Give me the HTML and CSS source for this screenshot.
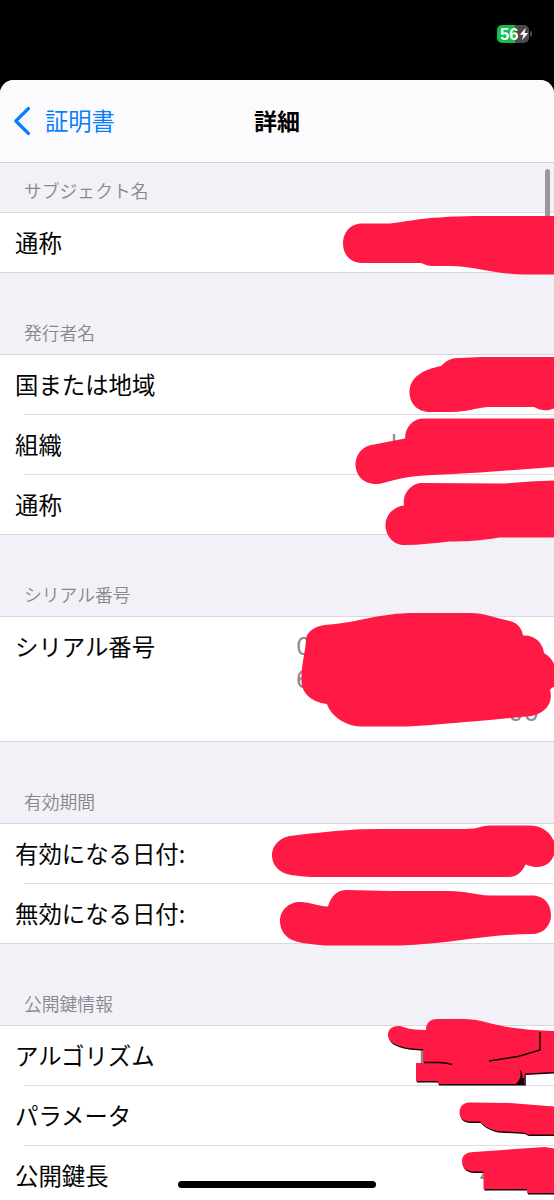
FILE: index.html
```html
<!DOCTYPE html>
<html lang="ja">
<head>
<meta charset="utf-8">
<title>詳細</title>
<link rel="stylesheet" href="styles.css">
</head>
<body>
<div class="screen">
  <header class="status">
    <div class="battery"><span class="level">56</span><svg class="bolt" width="10" height="14" viewBox="0 0 10 14"><path d="M6.8 0.8 0.8 7.8h3.6L3 13.2 9.2 5.9H5.5z"/></svg></div>
    <span class="battery-tip"></span>
  </header>
  <main class="sheet">
    <nav class="nav">
      <a class="back"><svg width="18" height="30" viewBox="0 0 18 30"><path d="M15.5 2.5 2.8 15l12.7 12.5"/></svg><span>証明書</span></a>
      <h1 class="title">詳細</h1>
    </nav>
    <section class="group first">
      <h2>サブジェクト名</h2>
      <div class="rows"><div class="row"><span>通称</span></div></div>
    </section>
    <section class="group">
      <h2>発行者名</h2>
      <div class="rows">
        <div class="row"><span>国または地域</span></div>
        <div class="row"><span>組織</span><span class="value org">l</span></div>
        <div class="row"><span>通称</span></div>
      </div>
    </section>
    <section class="group">
      <h2>シリアル番号</h2>
      <div class="rows">
        <div class="row tall"><span>シリアル番号</span><span class="value serial"><span>0</span><span>6</span><span class="end">00</span></span></div>
      </div>
    </section>
    <section class="group">
      <h2>有効期間</h2>
      <div class="rows">
        <div class="row"><span>有効になる日付:</span></div>
        <div class="row"><span>無効になる日付:</span></div>
      </div>
    </section>
    <section class="group">
      <h2>公開鍵情報</h2>
      <div class="rows">
        <div class="row"><span>アルゴリズム</span></div>
        <div class="row"><span>パラメータ</span></div>
        <div class="row"><span>公開鍵長</span><span class="value bits">4</span></div>
      </div>
    </section>
  </main>
  <div class="scrollbar"></div>
  <svg class="marks" width="554" height="1200" viewBox="0 0 554 1200">
    <defs>
      <path id="alg" d="M388 1035C388 1028 394 1025.5 400 1026C405 1027 408 1030 426 1030C426 1023 430 1019 437 1019H465C490 1020 493 1029 554 1031V1072L525 1073.5V1084H438V1081H416V1063H423V1049C405 1049 388 1045 388 1035Z"/>
      <path id="param" d="M459.5 1112C460 1106 464 1102.5 469 1102.5L510 1103L554 1106.5V1134.5H528L524 1132.5L497 1131C490 1129 485 1127 480 1121.500H470C463 1121.500 459.500 1118 459.500 1112Z"/>
      <path id="len" d="M462 1161C462 1155 467 1152 474 1152L545 1147L554 1148.500V1193H527V1189H483.500V1171.500H474C466 1171 462 1168 462 1161Z"/>
    </defs>
    <path class="ink" d="M362 263C350 263 343 254 343 243.500S350 223.500 362 223.500H390C405 222 420 218 440 217.500Q455 216 475 216H554V274.500H525C495 274.500 475 266 450 266H432C425 266 424 263 420 263Z"/>
    <path class="ink" d="M430 412C417 412 409.500 403 409.500 392C410 377 422 370 441 366C448 359 452 358 460 358L480 357H554V408.500C545 412 540 410 534 407H488C475 408 466 412 452 412Z"/>
    <path class="ink" d="M376 484C363 484 355.500 475 355.500 464C355.500 454 363 445.500 374 444.500L405 438.500C405 426 414 418.500 424 418.500H554V467L480 472.500L424 475.500C405 476.500 395 480 385 482.500Q380 484 376 484Z"/>
    <path class="ink" d="M404 545C393 545 385.500 535 385.500 525.500C385.500 515 393 507 404 505.500C402 492 413 483 422 483L505 483.500L530 481.500L554 480.500V537.500H499C480 541 465 541.500 450 541.500C435 543 420 545 404 545Z"/>
    <path class="ink" d="M306 640C306 632 315 625 330 624.500C360 622 380 613 415 613H470C485 613 495 618 510 621C518 623 522 629 523 635.500C535 635 543 643 544 653Q551 657 554 664V687Q552 687 550 690C553 701 548 712 532 716L490 720C440 724 420 726.500 400 726.500H360C345 726 330 715 327 704C310 702 302 692 301.500 682C301 665 305 655 306 640Z"/>
    <path class="ink" d="M294 835.500Q320 832 350 830Q360 829 380 829H465C478 829 482 825.500 490 825.500H530C545 826 551 835 554 841V855C551 863 545 867 537 867C531 867 528 865 525.500 864.500C522 872 517 877 509 877H310Q298 876 291 875C279 873 272 865 272 855.500C272 845 281 836 294 835.500Z"/>
    <path class="ink" d="M300 902C311 902 318 906.500 328 906.500C331 896 337 890 347 890L390 891H450C465 891 475 895 490 895.500H532C545 895.500 551 905 551 915C551 926 543 934 532 934C490 934 450 944 400 945.500H325C310 944 300 943 295 941C285 938 280 930 280 921C280 910 289 902 300 902Z"/>
    <path class="value-stroke" d="M422 1048v17"/>
    <g class="shade"><use href="#alg"/><use href="#param"/><use href="#len"/></g>
    <g class="ink"><use href="#alg"/><use href="#param"/><use href="#len"/></g>
    <path class="blade" d="M524.500 1074V1085H514Q521 1081 520.500 1073Q520.500 1070 518.500 1069Q523 1071 522.500 1078L524 1078Z"/>
    <path class="line" d="M489 1061L518 1056.500L540 1050V1032M424 1062.500H438Q446 1062.500 452 1064.500"/>
  </svg>
  <div class="home"></div>
</div>
</body>
</html>
```
FILE: styles.css
```css
* { box-sizing: border-box; }
body { margin: 0; background: #000; }
.screen {
  position: relative;
  width: 554px;
  height: 1200px;
  overflow: hidden;
  background: #000;
  color: #050505;
  font-family: "Noto Sans CJK JP", sans-serif;
}
.status {
  height: 80px;
  padding: 25px 22px 0 0;
  display: flex;
  justify-content: flex-end;
}
.battery {
  width: 32px;
  height: 18px;
  border-radius: 5px;
  background: linear-gradient(90deg, #0dc14b 56%, #4a4a4c 56%);
  display: flex;
  align-items: center;
  padding-left: 3px;
}
.level {
  color: #fff;
  font: 700 16.500px/18px "Liberation Sans", sans-serif;
  width: 18.500px;
}
.bolt { fill: #fff; }
.battery-tip {
  width: 2px;
  height: 6px;
  margin: 6px 0 0 1px;
  border-radius: 0 2px 2px 0;
  background: #4a4a4c;
}
.sheet {
  height: 1120px;
  overflow: hidden;
  border-radius: 14px 14px 0 0;
  background: #f2f1f7;
}
.nav {
  display: grid;
  grid-template-columns: 1fr auto 1fr;
  align-items: center;
  height: 83px;
  background: #fbfbfd;
  border-bottom: 1px solid #d2d2d6;
}
.back {
  display: flex;
  align-items: center;
  gap: 14px;
  padding-left: 13px;
  color: #087dff;
  font-size: 23.300px;
  line-height: 34px;
}
.back span, .title { padding-bottom: 2px; }
.back svg { fill: none; stroke: currentColor; stroke-width: 3.200; stroke-linecap: round; stroke-linejoin: round; }
.title { margin: 0; font-size: 23px; line-height: 34px; font-weight: 700; color: #000; }
.group h2 {
  height: 81px;
  margin: 0;
  padding: 46px 24px 0;
  font-size: 17.800px;
  line-height: 26px;
  font-weight: 350;
  color: #87878d;
}
.group.first h2 { height: 49px; padding-top: 14px; }
.rows { border: solid #d9d9dd; border-width: 1px 0; background: #fff; }
.row {
  display: flex;
  justify-content: space-between;
  height: 59px;
  padding: 12px 15px 0;
  font-size: 23.400px;
  line-height: 35px;
}
.row + .row {
  height: 60px;
  padding-top: 13px;
  background: linear-gradient(#dedee1, #dedee1) 24px 0 / 100% 1px no-repeat;
}
.row.tall { height: 124px; }
.value { color: #8a8a8f; font: 400 24.500px/33px Inter, sans-serif; }
.org { width: 148px; }
.serial { width: 243px; padding-top: 1px; display: flex; flex-direction: column; }
.serial .end { text-align: right; }
.bits { width: 60px; }
.scrollbar {
  position: absolute;
  left: 545px;
  top: 169px;
  width: 5px;
  height: 60px;
  border-radius: 3px;
  background: #98989e;
}
.marks { position: absolute; left: 0; top: 0; }
.ink { fill: #ff1a45; }
.shade { fill: #160307; transform: translate(0.8px, 1.500px); }
.blade { fill: #120205; }
.line { fill: none; stroke: #120205; stroke-width: 1.600; }
.value-stroke { stroke: #8a8a8f; stroke-width: 2.500; }
.home {
  position: absolute;
  left: 178px;
  top: 1181px;
  width: 198px;
  height: 7px;
  border-radius: 4px;
  background: #000;
}
```
